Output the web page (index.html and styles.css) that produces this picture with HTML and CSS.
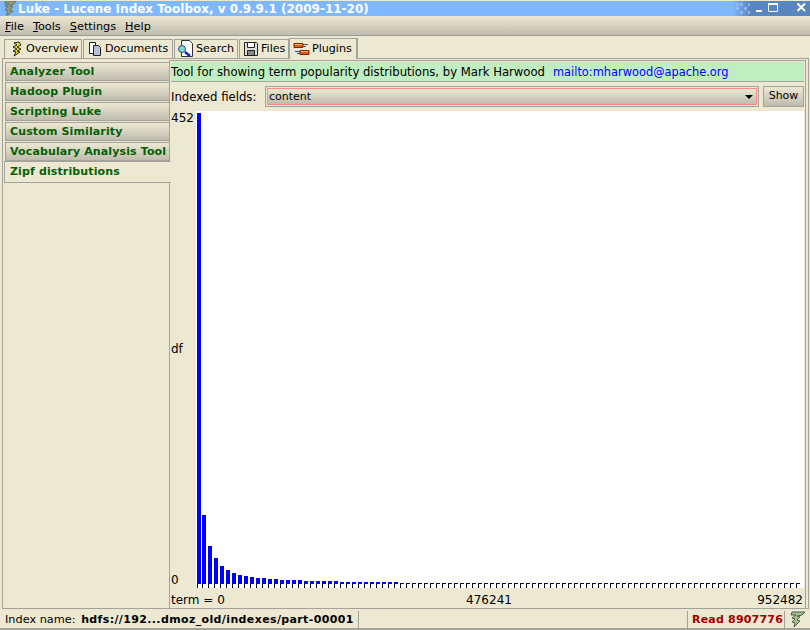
FILE: index.html
```html
<!DOCTYPE html>
<html lang="en">
<head>
    <meta charset="UTF-8">
    <title>Luke - Lucene Index Toolbox</title>
    <link rel="stylesheet" href="styles.css">
</head>
<body>
    <div class="window">
        <div class="titlebar">
            <svg class="app-icon" width="16" height="15" viewBox="0 0 16 15"><path d="M3 0h11l-2 3-4 2 3 1-3 3 3 1-5 4H4l2-4-3-1 3-3-3-1 4-2H3z" fill="#8f9a78" stroke="#5f6a55" stroke-width=".8"/></svg>
            <span class="title-text">Luke - Lucene Index Toolbox, v 0.9.9.1 (2009-11-20)</span>
            <div class="title-buttons">
                <svg width="76" height="15" viewBox="0 0 76 15">
                    <path d="M2 2h3v3H2zM6 2h3v3H6zM2 6h3v3H2zM10 6h3v3h-3zM6 10h3v3H6zM14 2h2v3h-2zM14 10h2v3h-2z" fill="#a9ccf5" fill-opacity=".6"/>
                    <path d="M22 9h6v2h-6z" fill="#fff"/>
                    <path d="M34.500 2.500h9v8h-9z" fill="none" stroke="#000"/>
                    <path d="M34 2h10v2H34z" fill="#fff"/><path d="M34.500 3.500v7h9v-7" fill="none" stroke="#fff"/>
                    <path d="M63.500 2.500l7.500 7.500M71 2.500L63.500 10" stroke="#fff" stroke-width="2"/>
                </svg>
            </div>
        </div>

        <div class="menubar">
            <span><u>F</u>ile</span>
            <span><u>T</u>ools</span>
            <span><u>S</u>ettings</span>
            <span><u>H</u>elp</span>
        </div>

        <div class="tabs">
            <div class="tab tab-overview">
                <svg width="16" height="16" viewBox="0 0 16 16"><path d="M11 1L6 2l3 2-4 2 4 2-4 2 3 1-2 4 6-4-3-1 4-2-4-2 4-2z" fill="#f7e21a" stroke="#222" stroke-width="1"/></svg>
                Overview
            </div>
            <div class="tab tab-documents">
                <svg width="16" height="16" viewBox="0 0 16 16"><path d="M2.500 1.500h6v11h-6z" fill="#fff" stroke="#222"/><path d="M6.500 4.500h5l2 2v8h-7z" fill="#b9bedd" stroke="#222"/></svg>
                Documents
            </div>
            <div class="tab tab-search">
                <svg width="20" height="18" viewBox="0 0 20 18"><path d="M5.500 .5h8l3 3v13h-11z" fill="#fff" stroke="#333"/><circle cx="6" cy="9" r="3.500" fill="#7fd0ea" stroke="#355"/><path d="M9 12l5 4" stroke="#1420c8" stroke-width="2.500"/></svg>
                Search
            </div>
            <div class="tab tab-files">
                <svg width="16" height="16" viewBox="0 0 16 16"><path d="M1.500 1.500h12l1 1v12h-13z" fill="#ddd" stroke="#222"/><path d="M4.500 1.500h7v5h-7z" fill="#fff" stroke="#222"/><path d="M4.500 9.500h7v5h-7z" fill="#888" stroke="#222"/></svg>
                Files
            </div>
            <div class="tab tab-plugins active">
                <svg width="17" height="16" viewBox="0 0 17 16"><path d="M1 2.500h9v4H1z" fill="#e05a10" stroke="#7a2a08"/><path d="M10 3.500h5M10 5.500h3" stroke="#555"/><path d="M7 9.500h9v4H7z" fill="#e05a10" stroke="#7a2a08"/><path d="M2 10.500h5M4 12.500h3" stroke="#2a3ea0"/><path d="M2 3.500h7M8 10.500h7" stroke="#f7c060"/></svg>
                Plugins
            </div>
        </div>

        <div class="main">
            <div class="sidebar">
                <div class="plugin">Analyzer Tool</div>
                <div class="plugin">Hadoop Plugin</div>
                <div class="plugin">Scripting Luke</div>
                <div class="plugin">Custom Similarity</div>
                <div class="plugin">Vocabulary Analysis Tool</div>
                <div class="plugin selected">Zipf distributions</div>
            </div>

            <div class="content">
                <div class="info"><span>Tool for showing term popularity distributions, by Mark Harwood</span><span class="link">mailto:mharwood@apache.org</span></div>
                <div class="fields">
                    <span class="fields-label">Indexed fields:</span>
                    <div class="combo">
                        <div class="combo-inner">
                            <span>content</span>
                            <span class="arrow"></span>
                        </div>
                    </div>
                    <div class="show-btn">Show</div>
                </div>

                <div class="chart-row">
                    <div class="y-axis">
                        <span>452</span>
                        <span>df</span>
                        <span>0</span>
                    </div>
                    <div class="plot">
                        <svg width="608" height="477" viewBox="0 0 608 477">
                            <defs>
                                <pattern id="ticks" x="6" y="472" width="6" height="5" patternUnits="userSpaceOnUse">
                                    <rect width="4" height="1" fill="#00007a"/>
                                    <rect width="1" height="5" fill="#000"/>
                                </pattern>
                            </defs>
                            <rect x="6" y="472" width="599" height="5" fill="url(#ticks)"/>
                            <path d="M1.500 473v4" stroke="#000" fill="none"/>
                            <path class="bars" d="M3 2V473M8 404V473M14 435V473M20 447V473M26 455V473M32 459V473M38 462V473M44 464V473M50 465V473M56 466V473M62 467V473M68 467V473M74 468V473M80 468V473M86 469V473M92 469V473M98 469V473M104 469V473M110 470V473M116 470V473M122 470V473M128 470V473M134 470V473M140 470V473M146 471V473M152 471V473M158 471V473M164 471V473M170 471V473M176 471V473M182 471V473M188 471V473M194 471V473M200 471V473"/>
                        </svg>
                    </div>
                </div>

                <div class="x-axis">
                    <span>term = 0</span>
                    <span class="x-mid">476241</span>
                    <span>952482</span>
                </div>
            </div>
        </div>

        <div class="statusbar">
            <div class="status-name">Index name: <b>hdfs://192...dmoz_old/indexes/part-00001</b></div>
            <div class="status-read">Read 8907776</div>
            <svg class="status-logo" width="18" height="17" viewBox="0 0 18 17"><path d="M3 1h13l-3 3-5 1 3 1-3 3 3 1-6 6 1-4-3-1 3-3-3-1 4-3H2z" fill="#9fc08f" stroke="#4f5f50"/></svg>
        </div>
    </div>
</body>
</html>
```

FILE: styles.css
```css
html, body {
    margin: 0;
    padding: 0;
}
body {
    font-family: "DejaVu Sans", sans-serif;
    font-size: 11px;
    color: #000;
    background-color: #ece8d2;
}
.window {
    width: 810px;
    height: 630px;
    display: flex;
    flex-direction: column;
    box-sizing: border-box;
    padding-top: 1px;
    overflow: hidden;
    background-color: #ece8d2;
}

/* title */
.titlebar {
    height: 15px;
    flex: none;
    display: flex;
    align-items: center;
    background: linear-gradient(to right, #80b8ff 0, #80b8ff 732px, #5a86bf 750px, #5a86bf 100%);
    color: #fff;
}
.app-icon {
    margin-left: 2px;
    flex: none;
}
.title-text {
    font-size: 12px;
    font-weight: bold;
    white-space: nowrap;
}
.title-buttons {
    flex: none;
    height: 15px;
    margin-left: auto;
}
.title-buttons svg {
    display: block;
}

/* menu */
.menubar {
    box-sizing: border-box;
    height: 20px;
    flex: none;
    display: flex;
    gap: 9px;
    padding: 1px 0 0 5px;
    align-items: center;
    background: linear-gradient(to bottom, #ede8d2, #bfbcae);
    border-bottom: 1px solid #9a9a9a;
    font-size: 11.300px;
}

/* tabs */
.tabs {
    box-sizing: border-box;
    height: 22px;
    flex: none;
    display: flex;
    padding: 2px 0 0 4px;
    align-items: flex-end;
    gap: 1px;
    position: relative;
    z-index: 1;
}
.tab {
    box-sizing: border-box;
    height: 19px;
    display: flex;
    align-items: center;
    gap: 2px;
    padding: 0 0 1px 3px;
    border: 1px solid #a3a39c;
    border-bottom: none;
    font-size: 11.100px;
    white-space: nowrap;
}
.tab-overview { width: 78px; }
.tab-documents { width: 90px; }
.tab-search { width: 64px; gap: 0; padding-left: 1px; }
.tab-files { width: 50px; }
.tab-plugins { width: 69px; }
.tab.active {
    height: 21px;
    margin-left: -1px;
    margin-bottom: -1px;
    border-width: 1px 2px 0 1px;
    background-color: #ece8d2;
}

/* main area */
.main {
    flex: 1;
    min-height: 0;
    display: flex;
    margin: 0 1px 0 2px;
    border: 1px solid #a3a39c;
}
.sidebar {
    width: 167px;
    flex: none;
    box-sizing: border-box;
    padding: 3px 0 0 2px;
}
.plugin {
    box-sizing: border-box;
    height: 19px;
    margin-bottom: 1px;
    padding-left: 4px;
    line-height: 18px;
    border: 1px solid #a3a39c;
    background: linear-gradient(to bottom, #ede8d2, #bfbcae);
    color: #046004;
    font-weight: bold;
    letter-spacing: .13px;
    white-space: nowrap;
}
.plugin.selected {
    height: 22px;
    margin: -1px -1px 0 -1px;
    padding-left: 5px;
    line-height: 20px;
    background: #ece8d2;
    border-right-color: #ece8d2;
    position: relative;
}
.content {
    flex: 1;
    min-width: 0;
    display: flex;
    flex-direction: column;
    box-sizing: border-box;
    margin: 1px 2px 0 -1px;
    padding-left: 1px;
    border: 1px solid #a3a39c;
    border-bottom: none;
}
.info {
    height: 19px;
    margin: 1px 1px 0 0;
    flex: none;
    display: flex;
    gap: 8px;
    line-height: 20px;
    background-color: #c0eec0;
    border-bottom: 1px solid #a3a39c;
    font-size: 11.650px;
    white-space: nowrap;
}
.link {
    color: #0000ff;
    font-size: 11.400px;
}
.fields {
    flex: none;
    height: 21px;
    margin-top: 4px;
    display: flex;
    align-items: center;
}
.fields-label {
    width: 94px;
    flex: none;
    font-size: 11.700px;
}
.combo {
    box-sizing: border-box;
    width: 494px;
    height: 21px;
    flex: none;
    border: 1px solid #a3a39c;
    padding: 1px;
}
.combo-inner {
    box-sizing: border-box;
    height: 17px;
    display: flex;
    justify-content: space-between;
    align-items: center;
    padding: 0 3px 0 1px;
    border: 1px solid #ff8a8a;
    background: linear-gradient(to bottom, #ede8d2, #bfbcae);
}
.arrow {
    width: 0;
    height: 0;
    border-left: 4px solid transparent;
    border-right: 4px solid transparent;
    border-top: 4px solid #000;
}
.show-btn {
    box-sizing: border-box;
    width: 41px;
    height: 21px;
    margin-left: 4px;
    flex: none;
    text-align: center;
    line-height: 18px;
    border: 1px solid #a3a39c;
    background: linear-gradient(to bottom, #ede8d2, #bfbcae);
}

/* chart */
.chart-row {
    flex: none;
    height: 477px;
    margin-top: 4px;
    display: flex;
}
.y-axis {
    width: 25px;
    flex: none;
    display: flex;
    flex-direction: column;
    justify-content: space-between;
    line-height: 15px;
    font-size: 12px;
}
.plot {
    width: 608px;
    height: 477px;
    flex: none;
    background-color: #fff;
}
.plot svg {
    display: block;
}
.bars {
    stroke: #0000ff;
    stroke-width: 4;
    fill: none;
}
.x-axis {
    flex: 1;
    display: flex;
    justify-content: space-between;
    padding-top: 5px;
    width: 632px;
    line-height: 14px;
    font-size: 12px;
}
.x-mid {
    margin-right: 4px;
}

/* status */
.statusbar {
    height: 21px;
    flex: none;
    display: flex;
    align-items: center;
    box-sizing: border-box;
    padding-top: 2px;
    border-bottom: 2px solid #a3a39c;
}
.status-name {
    box-sizing: border-box;
    width: 359px;
    height: 17px;
    padding-left: 5px;
    line-height: 18px;
    border-right: 1px solid #a3a39c;
    white-space: nowrap;
    font-size: 11.300px;
}
.status-name b {
    font-size: 11px;
    letter-spacing: .37px;
    margin-left: 2px;
}
.status-read {
    box-sizing: border-box;
    width: 98px;
    height: 17px;
    margin-left: auto;
    margin-right: 4px;
    padding-left: 4px;
    line-height: 18px;
    color: #a00000;
    font-weight: bold;
    letter-spacing: .2px;
    border-left: 1px solid #a3a39c;
    border-right: 1px solid #a3a39c;
    white-space: nowrap;
}
.status-logo {
    margin-right: 3px;
    flex: none;
}
```
